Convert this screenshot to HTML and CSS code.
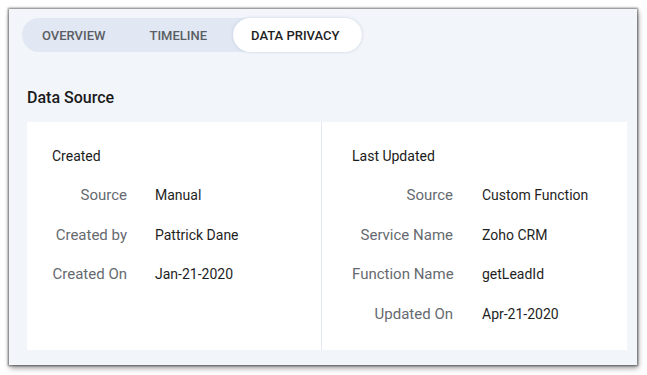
FILE: index.html
```html
<!DOCTYPE html>
<html>
<head>
<meta charset="utf-8">
<link rel="stylesheet" href="styles.css">
</head>
<body>
<div class="window">
  <div class="tabs">
    <div class="tab t1">OVERVIEW</div>
    <div class="tab t2">TIMELINE</div>
    <div class="tab t3 active">DATA PRIVACY</div>
  </div>
  <h2 class="heading">Data Source</h2>
  <div class="card">
    <div class="col left">
      <div class="col-title">Created</div>
      <div class="rows">
        <div class="label">Source</div><div class="value">Manual</div>
        <div class="label">Created by</div><div class="value">Pattrick Dane</div>
        <div class="label">Created On</div><div class="value">Jan-21-2020</div>
      </div>
    </div>
    <div class="col right">
      <div class="col-title">Last Updated</div>
      <div class="rows">
        <div class="label">Source</div><div class="value">Custom Function</div>
        <div class="label">Service Name</div><div class="value">Zoho CRM</div>
        <div class="label">Function Name</div><div class="value">getLeadId</div>
        <div class="label">Updated On</div><div class="value">Apr-21-2020</div>
      </div>
    </div>
  </div>
</div>
</body>
</html>
```
FILE: styles.css
```css
html, body {
  margin: 0;
  padding: 0;
  background: #ffffff;
}
body {
  width: 647px;
  height: 375px;
  overflow: hidden;
  font-family: Roboto, "Liberation Sans", sans-serif;
}
.window {
  box-sizing: border-box;
  margin: 9px 0 0 9px;
  width: 628px;
  height: 356px;
  background: #f2f5fa;
  box-shadow: 0 0 2px 1px rgba(0,0,0,0.5), 1px 3px 6px rgba(0,0,0,0.4);
  padding: 9px 10px 0 13px;
  display: flex;
  flex-direction: column;
}
.tabs {
  display: flex;
  align-self: flex-start;
  height: 34px;
  background: #e1e8f3;
  border-radius: 17px;
}
.tab {
  display: flex;
  align-items: center;
  font-size: 13px;
  font-weight: 500;
  color: #5a5d63;
  border-radius: 17px;
}
.t1 { padding: 0 22px 0 20px; }
.t2 { padding: 0 26px 0 22px; }
.t3 { padding: 0 23px 0 18px; }
.tab.active {
  background: #ffffff;
  color: #1f1f1f;
  box-shadow: 0 0 3px rgba(120,140,180,0.35);
}
.heading {
  margin: 36px 0 0 5px;
  font-size: 16px;
  font-weight: 500;
  color: #1a1a1a;
  line-height: 20px;
}
.card {
  margin: 14px 0 0 5px;
  height: 228px;
  background: #ffffff;
  display: flex;
}
.col {
  box-sizing: border-box;
  padding-top: 24px;
}
.left {
  width: 295px;
  padding-left: 25px;
  border-right: 1px solid #e4e9f1;
}
.right {
  flex: 1;
  padding-left: 30px;
}
.col-title {
  font-size: 14px;
  color: #1a1a1a;
  line-height: 20px;
}
.rows {
  margin-top: 19px;
  display: grid;
  row-gap: 19.5px;
  align-items: center;
}
.left .rows { grid-template-columns: 75px auto; column-gap: 28px; }
.right .rows { grid-template-columns: 101px auto; column-gap: 29px; }
.label {
  text-align: right;
  font-size: 15px;
  color: #666a70;
  line-height: 20px;
  white-space: nowrap;
}
.value {
  font-size: 14px;
  color: #1f1f1f;
  line-height: 20px;
  white-space: nowrap;
}
```
